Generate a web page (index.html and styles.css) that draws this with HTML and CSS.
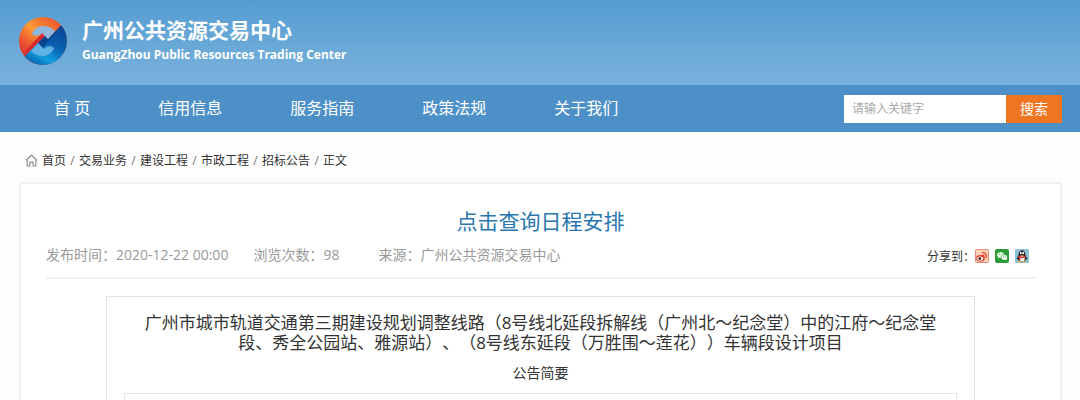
FILE: index.html
```
<!DOCTYPE html>
<html lang="zh-CN">
<head>
    <meta charset="UTF-8">
    <meta name="viewport" content="width=device-width, initial-scale=1.0">
    <title>广州公共资源交易中心</title>
    <link rel="stylesheet" href="styles.css">
</head>
<body>
    <header class="header">
        <svg class="logo" viewBox="0 0 48 48" aria-hidden="true">
            <defs>
                <linearGradient id="warm" x1="0.9" y1="0" x2="0.1" y2="1">
                    <stop offset="0" stop-color="#e8432b"/>
                    <stop offset="0.45" stop-color="#fa9a36"/>
                    <stop offset="0.65" stop-color="#f0622f"/>
                    <stop offset="0.9" stop-color="#d92b31"/>
                </linearGradient>
                <linearGradient id="cool" x1="0.8" y1="0.1" x2="0.3" y2="1">
                    <stop offset="0" stop-color="#0b438f"/>
                    <stop offset="0.45" stop-color="#0a5fb0"/>
                    <stop offset="0.75" stop-color="#10a0e0"/>
                    <stop offset="1" stop-color="#0b5aa8"/>
                </linearGradient>
                <clipPath id="round"><circle cx="24" cy="24" r="24"/></clipPath>
            </defs>
            <g clip-path="url(#round)">
                <rect width="48" height="48" fill="url(#warm)"/>
                <path fill="#d92b31" d="M23 16L27 20L12 37L4 42L8 32Z"/>
                <path fill="url(#cool)" d="M50 0L29 22L26 19L19 26L2 43V50H50Z"/>
                <path fill="#0b438f" d="M42 9L24 31L19 26L26 19L29 22Z"/>
                <path fill="#8fb6dc" d="M13 17C16 8 28 6 36 14L29 22L23 16C21 19 16 20 13 17Z"/>
                <path fill="#5fb0e4" d="M35 31C32 40 20 42 12 34L19 26L25 32C27 29 32 28 35 31Z"/>
            </g>
        </svg>
        <div>
            <h1 class="site-name">广州公共资源交易中心</h1>
            <p class="site-name-en">GuangZhou Public Resources Trading Center</p>
        </div>
    </header>

    <div class="navbar">
        <nav class="nav">
            <a href="#">首 页</a>
            <a href="#">信用信息</a>
            <a href="#">服务指南</a>
            <a href="#">政策法规</a>
            <a href="#">关于我们</a>
        </nav>
        <form class="search">
            <input type="text" placeholder="请输入关键字" aria-label="请输入关键字">
            <button type="button">搜索</button>
        </form>
    </div>

    <main class="main">
        <div class="breadcrumb">
            <svg class="home-icon" viewBox="0 0 12 12" aria-hidden="true">
                <path d="M1 6L6 1L11 6M2 5V11H4.5V7.5H7.5V11H10V5"/>
            </svg>
            <a href="#">首页</a><span>/</span><a href="#">交易业务</a><span>/</span><a href="#">建设工程</a><span>/</span><a href="#">市政工程</a><span>/</span><a href="#">招标公告</a><span>/</span><em>正文</em>
        </div>

        <article class="card">
            <h2 class="card-title"><a href="#">点击查询日程安排</a></h2>
            <div class="meta">
                <span class="date">发布时间：2020-12-22 00:00</span>
                <span class="views">浏览次数：98</span>
                <span>来源：广州公共资源交易中心</span>
                <div class="share">
                    <span>分享到：</span>
                    <a href="#" aria-label="新浪微博">
                        <svg viewBox="0 0 14 14">
                            <rect x="0.5" y="0.5" width="13" height="13" rx="1" fill="#fbd3b4" stroke="#e08a7c"/>
                            <path fill="none" stroke="#e5402f" stroke-width="1.3" d="M7 3.5C10 3 12 6 11 9M7 6Q9 6 8.8 8"/>
                            <ellipse cx="5.5" cy="9.2" rx="4.3" ry="3.3" fill="#dc3a2e"/>
                            <ellipse cx="5.2" cy="9.5" rx="3" ry="2.1" fill="#fff"/>
                            <circle cx="4.8" cy="9.6" r="1.4" fill="#3b1d1c"/>
                        </svg>
                    </a>
                    <a href="#" aria-label="微信">
                        <svg viewBox="0 0 14 14">
                            <rect width="14" height="14" rx="2" fill="#2b9c36"/>
                            <path fill="#e9ffe5" d="M2 6C2 2 9 2 9.3 5.5C7 5.5 5.5 7 6 8.8L4.5 8.6L3 9.5L3.2 8.2Z"/>
                            <ellipse cx="9.3" cy="8.4" rx="2.9" ry="2.4" fill="#fff"/>
                            <path fill="#fff" d="M9.5 10L11.5 11.6L11.3 9.6Z"/>
                            <path stroke="#2b9c36" d="M4 5h1M6.5 5h1M8 8h1M10 8h1"/>
                        </svg>
                    </a>
                    <a href="#" aria-label="QQ">
                        <svg viewBox="0 0 14 14">
                            <rect width="14" height="14" rx="1" fill="#8fc4d6"/>
                            <path fill="#27272d" d="M3.5 6C3.5-0.5 10.5-0.5 10.5 6L12.5 10L11 10.5L9.5 12.5H4.5L3 10.5L1.5 10Z"/>
                            <ellipse cx="7" cy="9.6" rx="2.8" ry="2.9" fill="#fff"/>
                            <ellipse cx="5.8" cy="4" rx="0.9" ry="1.2" fill="#fff"/>
                            <ellipse cx="8.2" cy="4" rx="0.9" ry="1.2" fill="#fff"/>
                            <path fill="#d93a34" d="M3.2 6.6Q7 8.5 10.8 6.6V8.2Q7 9.8 5.5 9V11H4V8.6L3.2 8Z"/>
                            <path fill="#e4a12c" d="M5 5.9H9L7 7ZM3 12H6.5V13.3H3ZM7.5 12H11V13.3H7.5Z"/>
                        </svg>
                    </a>
                </div>
            </div>

            <section class="notice">
                <h3>广州市城市轨道交通第三期建设规划调整线路（8号线北延段拆解线（广州北～纪念堂）中的江府～纪念堂<br>段、秀全公园站、雅源站）、（8号线东延段（万胜围～莲花））车辆段设计项目</h3>
                <p>公告简要</p>
                <div class="notice-body"></div>
            </section>
        </article>
    </main>
</body>
</html>
```
FILE: styles.css
```
* {
    box-sizing: border-box;
}

body {
    margin: 0;
    min-height: 100vh;
    display: flex;
    flex-direction: column;
    font-family: "Open Sans", "Noto Sans CJK SC", sans-serif;
    font-size: 14px;
    text-spacing-trim: space-all;
    color: #333;
    background: #fdfdfd;
}

h1, h2, h3, p {
    margin: 0;
    font-weight: normal;
}

a {
    color: inherit;
    text-decoration: none;
}

/* header */
.header {
    display: flex;
    align-items: center;
    gap: 15px;
    height: 85px;
    padding: 0 19px 4px;
    color: #fff;
    background: linear-gradient(#559dd1, #7ab2dd);
}

.logo {
    width: 48px;
    height: 48px;
}

.site-name {
    font-size: 21px;
    line-height: 28px;
    font-weight: bold;
}

.site-name-en {
    font-size: 12px;
    line-height: 22px;
    font-weight: bold;
}

/* navigation */
.navbar {
    display: flex;
    align-items: center;
    justify-content: space-between;
    height: 47px;
    padding: 0 18px 0 20px;
    background: #4d90c8;
}

.nav {
    display: flex;
}

.nav a {
    padding: 0 34px;
    font-size: 16px;
    line-height: 47px;
    color: #fff;
}

.search {
    display: flex;
    height: 28px;
}

.search input {
    width: 162px;
    padding: 0 8px;
    border: 0;
    border-radius: 0;
    font-family: inherit;
    font-size: 12px;
    background: #fff;
}

.search input::placeholder {
    color: #aaa;
}

.search button {
    width: 56px;
    padding: 0 0 2px;
    border: 0;
    font-family: inherit;
    font-size: 14px;
    color: #fff;
    background: #ee7623;
}

/* content */
.main {
    flex: 1;
    display: flex;
    flex-direction: column;
    padding: 0 18px 0 19px;
}

.breadcrumb {
    display: flex;
    align-items: center;
    height: 50px;
    padding: 6px 6px 0;
    font-size: 12px;
    color: #333;
}

.breadcrumb span {
    width: 13px;
    text-align: center;
    color: #777;
}

.breadcrumb em {
    font-style: normal;
}

.home-icon {
    width: 13px;
    height: 13px;
    margin-right: 4px;
    fill: none;
    stroke: #888;
}

.card {
    flex: 1;
    display: flex;
    flex-direction: column;
    padding: 21px 25px 0;
    border: 2px solid #f0f0f0;
    border-bottom: 0;
    background: #fff;
}

.card-title {
    font-size: 21px;
    line-height: 32px;
    text-align: center;
    color: #2877ae;
}

.meta {
    display: flex;
    align-items: center;
    height: 42px;
    padding-bottom: 6px;
    border-bottom: 2px solid #f0f0f0;
    color: #999;
}

.date {
    margin-right: 25px;
}

.views {
    margin-right: 39px;
}

.share {
    display: flex;
    align-items: center;
    gap: 6px;
    margin-left: auto;
    padding: 4px 6px 0 0;
    font-size: 12px;
    color: #333;
}

.share span {
    margin-right: -6px;
}

.share svg {
    display: block;
    width: 14px;
    height: 14px;
}

.notice {
    flex: 1;
    display: flex;
    flex-direction: column;
    margin: 17px 60px 0;
    padding: 16px 17px 0;
    border: 1px solid #e4e4e4;
    border-bottom: 0;
    text-align: center;
}

.notice h3 {
    font-size: 17px;
    line-height: 20px;
}

.notice p {
    margin: 11px 0;
    line-height: 18px;
}

.notice-body {
    flex: 1;
    border: 1px solid #e4e4e4;
    border-bottom: 0;
}
```
